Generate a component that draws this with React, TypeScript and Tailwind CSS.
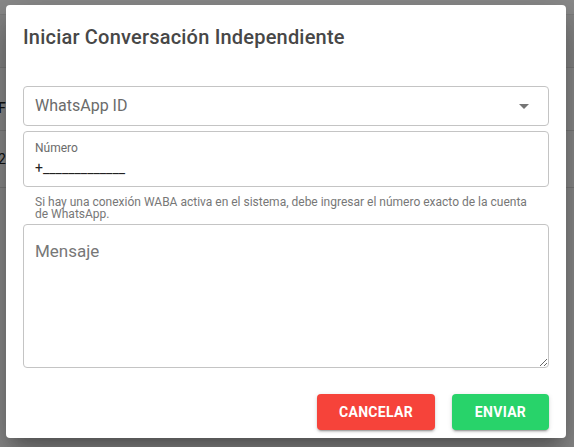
import { useState } from 'react';

function ArrowDropDown() {
    return (
        <svg viewBox="0 0 24 24" className="w-6 h-6 fill-[#757575]">
            <path d="M7 10l5 5 5-5z" />
        </svg>
    );
}

export default function App() {
    const [mensaje, setMensaje] = useState('');

    return (
        <div className="relative w-[574px] h-[447px] overflow-hidden bg-white font-['Roboto',sans-serif]">
            {/* Page behind the dialog */}
            <div className="flex flex-col text-[14px] text-[#222]">
                <div className="h-[15px] border-b border-[#e6e6e6]" />
                <div className="h-[53px] border-b border-[#e0e0e0] bg-[#f5f5f5]" />
                <div className="h-[63px] border-b border-[#e0e0e0] pt-[30px] leading-[20px] -ml-[2px] font-medium">F</div>
                <div className="h-[57px] border-b border-[#e0e0e0] flex items-center -ml-[2px]">2</div>
            </div>

            {/* Backdrop */}
            <div className="absolute inset-0 bg-black/45 flex items-start pl-[6px] pt-[5px]">
                <div className="w-[560px] h-[433px] bg-white rounded-[4px] shadow-[0_11px_15px_-7px_rgba(0,0,0,0.25),0_24px_38px_3px_rgba(0,0,0,0.16),0_9px_46px_8px_rgba(0,0,0,0.14)] flex flex-col px-[17px]">
                    {/* Header */}
                    <h2 className="pt-[16px] text-[20px] leading-[32px] font-medium text-[#474747] tracking-[0.2px]">
                        Iniciar Conversación Independiente
                    </h2>

                    {/* Body */}
                    <div className="mt-[33px] flex flex-col">
                        <div className="h-[40px] border border-[#c4c4c4] rounded-[4px] flex items-center justify-between pl-[11px] pr-[12px]">
                            <span className="text-[16px] text-[#6b6b6b]">WhatsApp ID</span>
                            <ArrowDropDown />
                        </div>

                        <div className="mt-[5px] h-[56px] border border-[#c4c4c4] rounded-[4px] flex flex-col pl-[11px] pt-[8px]">
                            <span className="text-[12px] leading-[16px] text-[#6b6b6b]">Número</span>
                            <span className="mt-[3px] text-[14px] leading-[18px] text-[#222]">+_____________</span>
                        </div>

                        <p className="mx-[12px] mt-[9px] text-[12px] leading-[12px] text-[#777]">
                            Si hay una conexión WABA activa en el sistema, debe ingresar el número exacto de la cuenta de WhatsApp.
                        </p>

                        <textarea
                            value={mensaje}
                            onChange={(e) => setMensaje(e.target.value)}
                            placeholder="Mensaje"
                            className="mt-[4px] h-[144px] border border-[#c4c4c4] rounded-[4px] px-[11px] pt-[14px] text-[17px] leading-[24px] text-[#222] placeholder:text-[#777] resize-y outline-none"
                        />
                    </div>

                    {/* Actions */}
                    <div className="mt-[26px] flex justify-end gap-[17px]">
                        <button className="w-[118px] h-[36px] rounded-[4px] bg-[#f6433a] text-white text-[14px] font-bold tracking-[0.3px] shadow-[0_3px_1px_-2px_rgba(0,0,0,0.2),0_2px_2px_0_rgba(0,0,0,0.14),0_1px_5px_0_rgba(0,0,0,0.12)]">
                            CANCELAR
                        </button>
                        <button className="w-[97px] h-[36px] rounded-[4px] bg-[#28d36a] text-white text-[14px] font-bold tracking-[0.3px] shadow-[0_3px_1px_-2px_rgba(0,0,0,0.2),0_2px_2px_0_rgba(0,0,0,0.14),0_1px_5px_0_rgba(0,0,0,0.12)]">
                            ENVIAR
                        </button>
                    </div>
                </div>
            </div>
        </div>
    );
}
